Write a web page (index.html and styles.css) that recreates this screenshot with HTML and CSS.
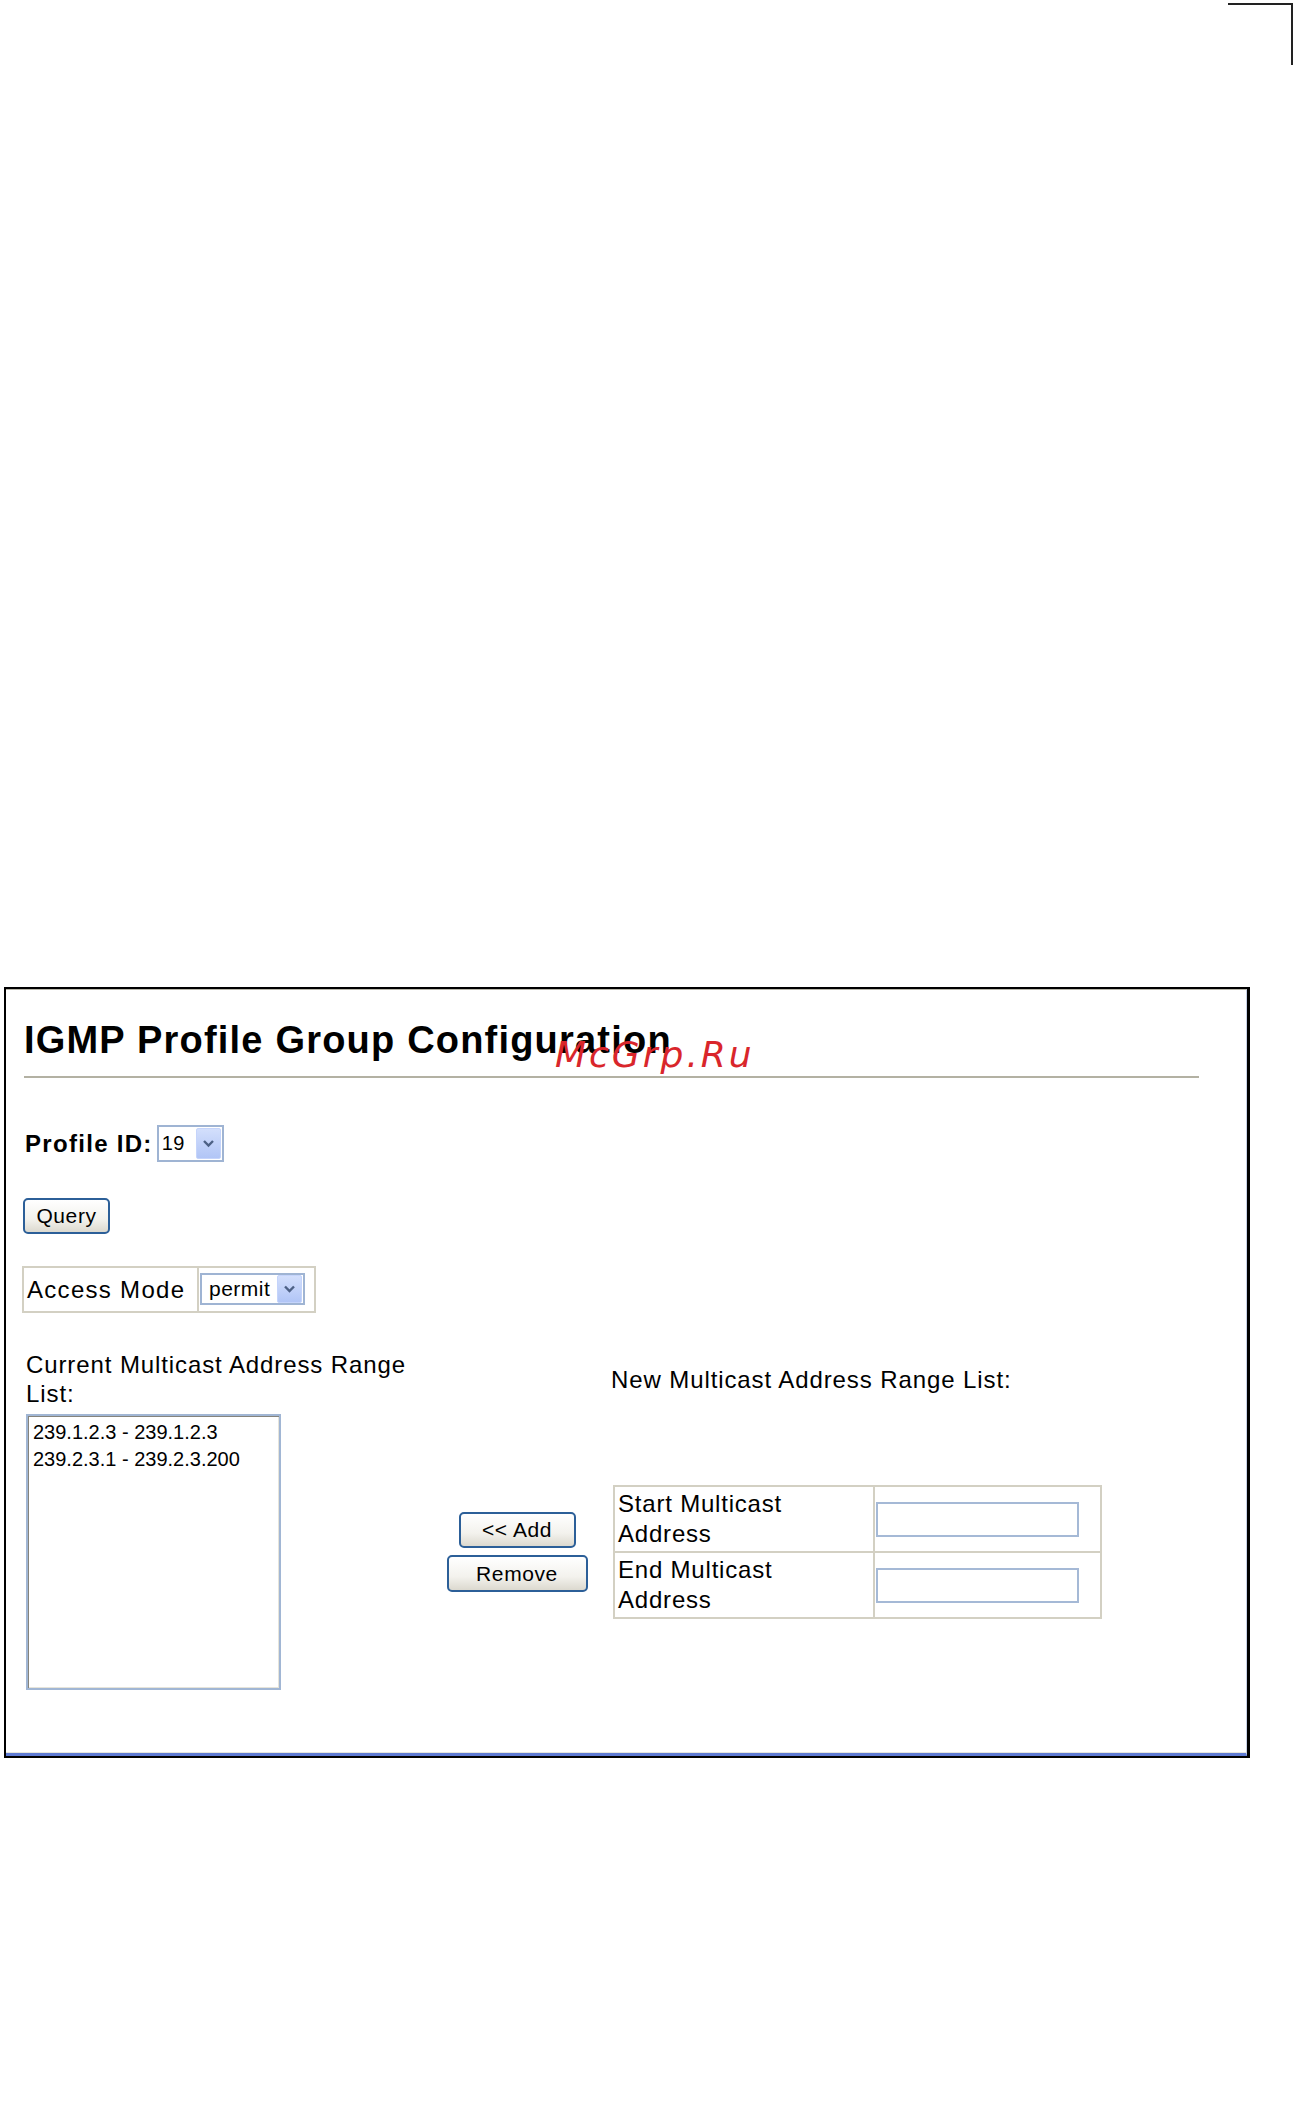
FILE: index.html
```html
<!DOCTYPE html>
<html lang="en">
<head>
    <meta charset="UTF-8">
    <meta name="viewport" content="width=device-width, initial-scale=1.0">
    <title>IGMP Profile Group Configuration</title>
    <link rel="stylesheet" href="styles.css">
</head>
<body>
    <div class="corner-mark"></div>

    <div class="window">
        <div class="panel">
            <h1 class="page-title">IGMP Profile Group Configuration</h1>
            <span class="watermark">McGrp.Ru</span>

            <!-- Profile selector -->
            <div class="profile-row">
                <span class="profile-label">Profile ID:</span>
                <div class="xp-select select-id">
                    <span class="select-value">19</span>
                    <span class="select-arrow">
                        <svg width="23" height="29" viewBox="0 0 23 29"><path d="M7 12 L11.5 16.5 L16 12" fill="none" stroke="#4d6185" stroke-width="2.4"/></svg>
                    </span>
                </div>
            </div>

            <button class="xp-btn btn-query">Query</button>

            <table class="grid-table access-table">
                <tr>
                    <td class="access-label">Access Mode</td>
                    <td class="access-field">
                        <div class="xp-select select-mode">
                            <span class="select-value">permit</span>
                            <span class="select-arrow">
                                <svg width="23" height="26" viewBox="0 0 23 26"><path d="M7 10.5 L11.5 15 L16 10.5" fill="none" stroke="#4d6185" stroke-width="2.4"/></svg>
                            </span>
                        </div>
                    </td>
                </tr>
            </table>

            <!-- Address ranges -->
            <div class="range-layout">
                <div class="range-head">Current Multicast Address Range List:</div>
                <div></div>
                <div class="range-head new-head">New Multicast Address Range List:</div>

                <div class="listbox">
                    <div class="list-item">239.1.2.3 - 239.1.2.3</div>
                    <div class="list-item">239.2.3.1 - 239.2.3.200</div>
                </div>

                <div class="range-actions">
                    <button class="xp-btn btn-add">&lt;&lt; Add</button>
                    <button class="xp-btn btn-remove">Remove</button>
                </div>

                <table class="grid-table new-table">
                    <tr>
                        <td class="field-label">Start Multicast Address</td>
                        <td class="field-input"><input type="text" class="xp-input"></td>
                    </tr>
                    <tr>
                        <td class="field-label">End Multicast Address</td>
                        <td class="field-input"><input type="text" class="xp-input"></td>
                    </tr>
                </table>
            </div>
        </div>
    </div>
</body>
</html>
```

FILE: styles.css
```css
body {
    margin: 0;
    background: #fff;
    font-family: "Liberation Sans", Arial, sans-serif;
    color: #000;
}
.corner-mark {
    width: 63px;
    height: 60px;
    margin: 3px 0 0 1228px;
    border-top: 2px solid #222;
    border-right: 2px solid #222;
}
.window {
    position: relative;
    width: 1241px;
    margin: 922px 0 0 4px;
    border: 2px solid #000;
    border-right-width: 3px;
}
.panel {
    padding: 28px 0 63px 16px;
    border-top: 1px solid #b8b6aa;
    border-right: 1px solid #c7d1e6;
    border-bottom: 3px solid #5f7bd3;
    box-shadow: inset 0 -1px 0 #e6e6de;
}
.page-title {
    margin: 0 47px 0 2px;
    padding-bottom: 14px;
    border-bottom: 2px solid #b3b1a3;
    font-size: 38px;
    line-height: 44px;
    font-weight: bold;
    letter-spacing: 1.2px;
}
.watermark {
    position: absolute;
    left: 549px;
    top: 48px;
    font-family: "DejaVu Sans", sans-serif;
    font-style: oblique;
    font-size: 36px;
    line-height: 36px;
    letter-spacing: 3px;
    color: #d9262b;
}
.profile-row {
    display: flex;
    align-items: center;
    gap: 4px;
    margin: 47px 0 0 3px;
}
.profile-label {
    font-size: 24px;
    font-weight: bold;
    letter-spacing: 1.3px;
}
.xp-select {
    box-sizing: border-box;
    display: flex;
    align-items: center;
    justify-content: space-between;
    background: #fff;
    border: 2px solid #9fb4d3;
}
.select-value {
    font-size: 20px;
    letter-spacing: 0.5px;
}
.select-arrow {
    display: flex;
    box-sizing: border-box;
    background: linear-gradient(#d3dffc, #b1c5f6);
    border: 1px solid #c5d4fb;
    border-radius: 2px;
    margin-right: 1px;
}
.select-id {
    width: 67px;
    height: 37px;
    padding-left: 3px;
}
.select-id .select-arrow {
    width: 25px;
    height: 31px;
}
.select-mode {
    width: 105px;
    height: 32px;
    padding-left: 7px;
}
.select-mode .select-value {
    font-size: 21px;
}
.select-mode .select-arrow {
    width: 25px;
    height: 28px;
}
.xp-btn {
    display: block;
    box-sizing: border-box;
    padding: 0;
    font-family: "Liberation Sans", Arial, sans-serif;
    font-size: 21px;
    letter-spacing: 0.6px;
    color: #000;
    background: linear-gradient(#ffffff, #f3f2ed 60%, #dcd9cf);
    border: 2px solid #2c5f98;
    border-radius: 5px;
}
.btn-query {
    width: 87px;
    height: 36px;
    margin: 36px 0 0 1px;
}
.grid-table {
    border-collapse: collapse;
    border: 2px solid #cdcabc;
}
.grid-table td {
    border: 2px solid #d3d0c3;
    padding: 0;
}
.access-table {
    margin-top: 32px;
    width: 294px;
}
.access-label {
    width: 170px;
    padding: 0 0 0 3px !important;
    font-size: 24px;
    letter-spacing: 1.3px;
    vertical-align: middle;
}
.access-field {
    padding: 5px 9px 6px 1px !important;
}
.range-layout {
    display: grid;
    grid-template-columns: 398px 186px auto;
    row-gap: 6px;
    align-items: center;
    margin: 37px 0 0 4px;
}
.range-head {
    font-size: 24px;
    line-height: 29px;
    letter-spacing: 0.9px;
}
.new-head {
    padding-left: 1px;
}
.listbox {
    box-sizing: border-box;
    width: 255px;
    height: 276px;
    padding: 3px 5px;
    border: 2px solid #a1b6d4;
    box-shadow: inset 1px 1px 0 #85847c, inset -1px -1px 0 #e6e4da;
}
.list-item {
    font-size: 20px;
    line-height: 27px;
}
.range-actions {
    display: flex;
    flex-direction: column;
    align-items: center;
    gap: 7px;
}
.btn-add {
    width: 117px;
    height: 36px;
}
.btn-remove {
    width: 141px;
    height: 37px;
}
.new-table {
    margin-left: 3px;
    width: 489px;
}
.new-table td {
    height: 64px;
}
.field-label {
    width: 235px;
    padding: 0 20px 0 3px !important;
    font-size: 24px;
    line-height: 30px;
    letter-spacing: 0.8px;
    vertical-align: middle;
}
.field-input {
    padding-left: 1px !important;
    vertical-align: middle;
}
.xp-input {
    display: block;
    box-sizing: border-box;
    width: 203px;
    height: 35px;
    margin: 0;
    border: 2px solid #a5b9d6;
    background: #fff;
}
```
